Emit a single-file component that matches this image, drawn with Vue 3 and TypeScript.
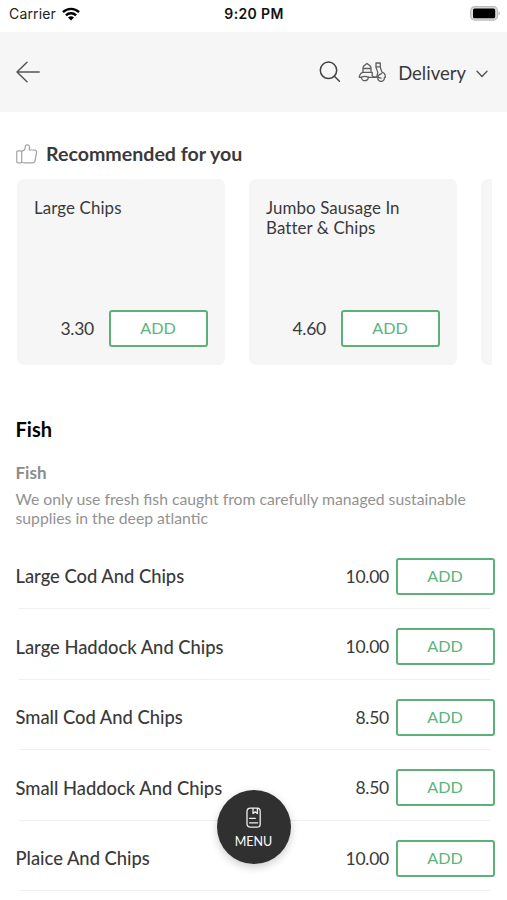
<script setup lang="ts">
interface Dish {
  name: string
  price: string
}

const recommended: Dish[] = [
  { name: 'Large Chips', price: '3.30' },
  { name: 'Jumbo Sausage In Batter & Chips', price: '4.60' },
]

const dishes: Dish[] = [
  { name: 'Large Cod And Chips', price: '10.00' },
  { name: 'Large Haddock And Chips', price: '10.00' },
  { name: 'Small Cod And Chips', price: '8.50' },
  { name: 'Small Haddock And Chips', price: '8.50' },
  { name: 'Plaice And Chips', price: '10.00' },
]
</script>

<template>
  <div class="screen">
    <div class="status">
      <div class="carrier">
        <span>Carrier</span>
        <svg width="18" height="14" viewBox="0 0 18 14" fill="none" stroke="#000" stroke-width="2.4">
          <path d="M1 5.2a11.4 11.4 0 0 1 16 0" />
          <path d="M3.9 8.3a7.2 7.2 0 0 1 10.2 0" />
          <path d="M9 13.6 6 10.6a4.3 4.3 0 0 1 6 0z" fill="#000" stroke="none" />
        </svg>
      </div>
      <div class="clock">9:20 PM</div>
      <svg class="battery" width="31" height="15" viewBox="0 0 31 15">
        <rect x="0.7" y="0.7" width="26.8" height="13.4" rx="4" fill="#ddd" stroke="#bbb" stroke-width="1.2" />
        <rect x="3" y="2.6" width="22.2" height="9.6" rx="1.5" fill="#000" />
        <path d="M28.7 5.2q2 2.2 0 4.4z" fill="#999" />
      </svg>
    </div>

    <header class="bar">
      <svg width="24" height="22" viewBox="0 0 24 22" fill="none" stroke="#555" stroke-width="1.5" stroke-linecap="round" stroke-linejoin="round">
        <path d="M23.2 11H1M11 1.2 1 11l10 9.8" />
      </svg>
      <div class="tools">
        <svg class="search" width="22" height="22" viewBox="0 0 22 22" fill="none" stroke="#444" stroke-width="1.5" stroke-linecap="round">
          <circle cx="9.5" cy="9.3" r="8.2" />
          <path d="m15.4 15.3 5 5" />
        </svg>
        <svg class="scooter" width="28" height="20" viewBox="0 0 28 20" fill="none" stroke="#606060" stroke-width="1.300" stroke-linejoin="round" stroke-linecap="round">
          <path d="M5 10.400V5.600Q5.500 3.400 7.600 2.600L9 1.400l1.400 1.200q2.100.8 2.600 3v4.800M5 6.500h8" />
          <path d="M5 10.400h9.200v3.400l1.400 1h3.200l1-4.400-1.800-5V1h4.300v4.300l1.600 4.800c2.400.6 3.600 2.700 3.400 5.300M5 10.400Q2 11 1.200 15.300h2.200M10.200 15.300h9.600q.8-3.300 3.900-3.600M17.800 4.900h4" />
          <path d="M3.400 15.200a3.500 3.500 0 1 0 7 0q-3.500-1.800-7 0M19.900 15.300a3.300 3.300 0 1 0 6.400 0M19.900 15.300l3.200.8" />
        </svg>
        <span class="mode">Delivery</span>
        <svg class="chevron" width="12" height="8" viewBox="0 0 12 8" fill="none" stroke="#555" stroke-width="1.400" stroke-linecap="round" stroke-linejoin="round">
          <path d="m1 1.300 5 5.200 5-5.200" />
        </svg>
      </div>
    </header>

    <section class="recommended">
      <div class="rec-title">
        <svg width="22" height="20" viewBox="0 0 22 20" fill="none" stroke="#a2a2a2" stroke-width="1.200" stroke-linejoin="round">
          <path d="M.8 8q0-1.200 1.200-1.200h2.500q1.200 0 1.200 1.200v9.700q0 1.200-1.200 1.200H2Q.8 18.900.8 17.700z" />
          <path d="M5.700 7.200C8 6.800 9.300 5.400 9.300 2.800 9.300 1.400 10 .8 11.200.8c2.300 0 2.900 2.600 1.900 5.200h5.200c1.900 0 2.500 1.400 2.200 2.900l-1.400 7.500c-.3 1.700-1.100 2.500-2.800 2.500H9c-1.500 0-2.200-.4-3.300-1" />
        </svg>
        <h2>Recommended for you</h2>
      </div>
      <div class="cards">
        <article v-for="dish in recommended" :key="dish.name" class="card">
          <h3>{{ dish.name }}</h3>
          <div class="buy">
            <span class="price">{{ dish.price }}</span>
            <button class="add">ADD</button>
          </div>
        </article>
        <article class="card"></article>
      </div>
    </section>

    <section class="menu">
      <h2>Fish</h2>
      <h4>Fish</h4>
      <p>We only use fresh fish caught from carefully managed sustainable supplies in the deep atlantic</p>
      <ul>
        <li v-for="dish in dishes" :key="dish.name">
          <span class="name">{{ dish.name }}</span>
          <span class="price">{{ dish.price }}</span>
          <button class="add">ADD</button>
        </li>
      </ul>
    </section>

    <button class="fab">
      <svg width="16" height="22" viewBox="0 0 16 22" fill="none" stroke="#eee" stroke-width="1.300" stroke-linecap="round" stroke-linejoin="round">
        <rect x="1" y="1.200" width="13.200" height="19" rx="3.200" />
        <path d="M7 1.500v5l2.200-1.600 2.200 1.600v-5M3.600 11.300h5.700M3.600 15.800h8" />
      </svg>
      <span>MENU</span>
    </button>
  </div>
</template>

<style>
body {
  margin: 0;
  background: #fff;
}
</style>

<style scoped>
.screen {
  position: relative;
  width: 507px;
  height: 900px;
  overflow: hidden;
  box-sizing: border-box;
  background: #fff;
  color: #3a3a3a;
  font-family: Lato, sans-serif;
}
h2, h3, h4, p, ul {
  margin: 0;
  padding: 0;
}
svg {
  display: block;
  flex: none;
}
.status {
  display: grid;
  grid-template-columns: 1fr auto 1fr;
  align-items: center;
  height: 32px;
  padding: 0 6px 5px 9px;
  box-sizing: border-box;
  font-family: Inter, sans-serif;
  font-size: 14px;
  color: #222;
}
.carrier {
  display: flex;
  align-items: center;
  gap: 6px;
  letter-spacing: 0.15px;
}
.clock {
  margin-right: 2px;
  font-weight: 600;
  letter-spacing: 0.35px;
  color: #111;
}
.battery {
  justify-self: end;
}
.bar {
  display: flex;
  align-items: center;
  justify-content: space-between;
  height: 80px;
  padding: 0 19px 0 16px;
  box-sizing: border-box;
  background: #f6f6f6;
}
.tools {
  display: flex;
  align-items: center;
}
.scooter {
  margin-left: 17px;
}
.mode {
  margin: 1px 0 0 12px;
  font-size: 18.5px;
  line-height: 24px;
}
.chevron {
  margin: 3px 0 0 10px;
}
.recommended {
  padding: 30px 15px 0 16px;
}
.rec-title {
  display: flex;
  align-items: center;
  gap: 8px;
  height: 24px;
}
.rec-title h2 {
  font-size: 19.600px;
  font-weight: 700;
  line-height: 24px;
}
.cards {
  display: flex;
  gap: 24px;
  margin: 13px 0 0 1px;
  overflow: hidden;
}
.card {
  flex: none;
  display: flex;
  flex-direction: column;
  justify-content: space-between;
  width: 208px;
  height: 186px;
  padding: 19px 17px 18px;
  box-sizing: border-box;
  border-radius: 7px;
  background: #f6f6f6;
}
.card h3 {
  font-size: 16.900px;
  font-weight: 400;
  line-height: 20px;
  letter-spacing: 0.1px;
}
.buy {
  display: flex;
  align-items: center;
  justify-content: flex-end;
  gap: 15px;
}
.price {
  font-size: 17.500px;
  letter-spacing: -0.25px;
}
.add {
  flex: none;
  width: 99px;
  height: 37px;
  padding: 0 1px 1px 0;
  border: 2px solid #5bb178;
  border-radius: 3px;
  background: #fff;
  color: #5bb57b;
  font: 400 16.200px/20px Lato, sans-serif;
}
.menu {
  padding: 51px 12px 0 15.500px;
}
.menu h2 {
  font-size: 20px;
  font-weight: 700;
  line-height: 26px;
  color: #000;
}
.menu h4 {
  margin-top: 19px;
  font-size: 17px;
  font-weight: 700;
  line-height: 24px;
  color: #8c8c8c;
}
.menu p {
  width: 465px;
  margin-top: 4px;
  font-size: 15.750px;
  line-height: 19px;
  color: #929292;
}
.menu ul {
  margin-top: 11.500px;
  list-style: none;
}
.menu li {
  display: flex;
  align-items: center;
  height: 70.500px;
  padding-top: 5px;
  box-sizing: border-box;
  background: linear-gradient(#f0f0f0, #f0f0f0) 3px 100% / calc(100% - 8px) 1px no-repeat;
}
.name {
  flex: 1;
  font-size: 18.350px;
  font-weight: 500;
}
.menu .price {
  margin-right: 7px;
}
.fab {
  position: absolute;
  left: 217px;
  top: 790px;
  display: flex;
  flex-direction: column;
  align-items: center;
  gap: 5px;
  width: 74px;
  height: 74px;
  padding: 17px 1px 0 0;
  border: 0;
  border-radius: 50%;
  background: #303030;
  box-shadow: 0 3px 9px rgba(0, 0, 0, 0.2);
  color: #fff;
  font: 400 12.500px/16px Lato, sans-serif;
}
</style>
